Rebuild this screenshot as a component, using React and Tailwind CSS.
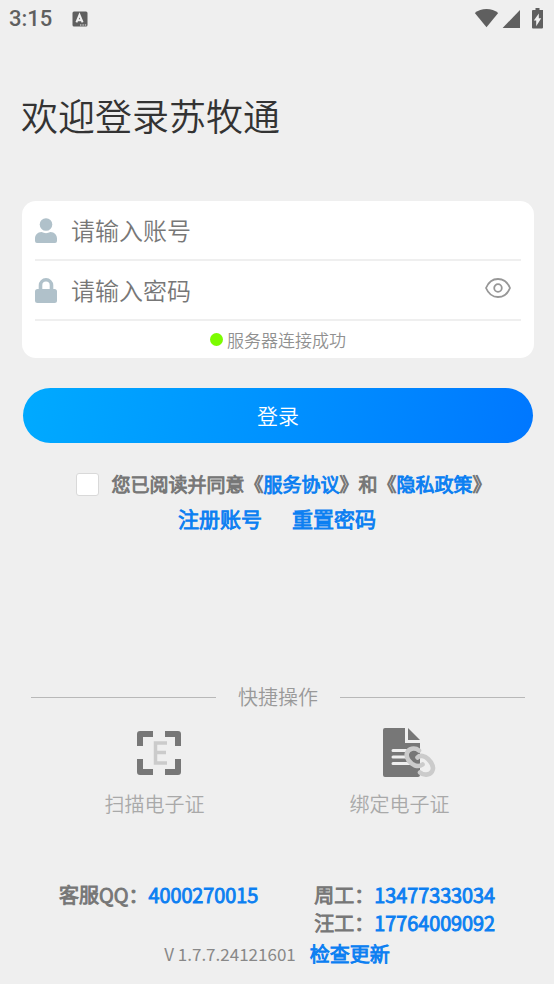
import React, { useState } from "react";

function TranslateIcon() {
  return (
    <svg width="16" height="16" viewBox="0 0 16 16" aria-hidden="true">
      <rect x="0.5" y="0.5" width="15" height="15" rx="1.5" fill="#5f5f5f" />
      <path d="M4.4 11.3 7.5 3.8l3.1 7.5M5.6 9.2h3.8" fill="none" stroke="#f0f0f0" strokeWidth="2" />
      <path d="M8 14h1.4M10.4 14h1.4M12.8 14h1.4" stroke="#f0f0f0" strokeWidth="1.2" />
    </svg>
  );
}

function StatusBar() {
  return (
    <div className="flex h-[38px] items-center justify-between pl-[9px] pr-2.5 text-[#5f5f5f]">
      <div className="flex items-center gap-5">
        <span className="font-[Roboto,sans-serif] text-[22px] leading-[38px] font-medium">3:15</span>
        <TranslateIcon />
      </div>
      <svg width="70" height="22" viewBox="0 0 70 22" fill="#5f5f5f" aria-hidden="true">
        <path d="M0.8 5C4 2.2 8 1 12.5 1S21 2.2 24.2 5L12.5 19.3Z" />
        <path d="M46 2v18H28.6Z" />
        <path d="M61.5 0h4v2H69v17.5a1 1 0 0 1-1 1h-9a1 1 0 0 1-1-1V3a1 1 0 0 1 1-1h2.5Z" />
        <path d="M64.8 5.5v4.7h2.4l-5 8v-5.7h-2.4Z" fill="#f0f0f0" />
      </svg>
    </div>
  );
}

function UserIcon() {
  return (
    <svg width="22" height="25" viewBox="0 0 22 25" fill="#b0c1ca" aria-hidden="true">
      <circle cx="11" cy="6.5" r="6.3" />
      <path d="M6.5 14c3 1.5 6 1.5 9 0C19.5 14 22 17 22 20.500V23a2 2 0 0 1-2 2H2a2 2 0 0 1-2-2v-2.500C0 17 2.500 14 6.500 14Z" />
    </svg>
  );
}

function LockIcon() {
  return (
    <svg width="22" height="25" viewBox="0 0 22 25" aria-hidden="true">
      <path d="M5.5 12V7.3a5.5 5.5 0 0 1 11 0V12" fill="none" stroke="#b0c1ca" strokeWidth="3.6" />
      <rect y="11" width="22" height="14" rx="2.5" fill="#b0c1ca" />
    </svg>
  );
}

function EyeIcon() {
  return (
    <svg width="26" height="20" viewBox="0 0 26 20" fill="none" stroke="#979797" strokeWidth="1.8" aria-hidden="true">
      <path d="M1 10C3.500 4 8 1 13 1s9.500 3 12 9c-2.500 6-7 9-12 9S3.500 16 1 10Z" strokeLinejoin="round" />
      <circle cx="13" cy="10" r="3.8" />
    </svg>
  );
}

function ScanIcon() {
  return (
    <svg width="44" height="44" viewBox="0 0 44 44" aria-hidden="true">
      <path
        d="M3 15V3h13M28 3h13v12M41 28v13H28M16 41H3V28"
        fill="none"
        stroke="#777"
        strokeWidth="6"
        strokeLinejoin="round"
      />
      <path d="M30 12H18.500v20H30M18.500 21.500H29" fill="none" stroke="#cbcbcb" strokeWidth="3.5" />
    </svg>
  );
}

function BindIcon() {
  return (
    <svg width="53" height="50" viewBox="0 0 53 50" aria-hidden="true">
      <path d="M2 0h20v15h15v32a2 2 0 0 1-2 2H2a2 2 0 0 1-2-2V2a2 2 0 0 1 2-2Z" fill="#777" />
      <path d="M25 0 37 12H25Z" fill="#777" />
      <path d="M10 22.500h13M10 29h13M10 35.500h17" stroke="#efefef" strokeWidth="3" strokeLinecap="round" />
      <g fill="none" stroke="#cbcbcb" strokeWidth="4.6" strokeLinecap="round">
        <path d="M36 22.500C31.500 19 25.500 20.500 24 25c-1.500 5 3 10.500 8 12.500 3 1 5.500.5 7.500-1" />
        <path d="M34.500 29.500C37 26.500 42 28 45 31c4 4 6.500 8.500 4 12.500-2.500 4-8.500 4-12 1" />
      </g>
    </svg>
  );
}

function QuickAction({ icon, label }) {
  return (
    <button type="button" className="flex flex-1 flex-col items-center text-[20px] leading-7 text-[#a9a9a9]">
      <span className="flex h-[50px] items-center">{icon}</span>
      <span className="mt-3">{label}</span>
    </button>
  );
}

function Phone({ name, number }) {
  return (
    <p>
      {name}：<a href={`tel:${number}`} className="text-[#0c7ff2]">{number}</a>
    </p>
  );
}

export default function App() {
  const [showPassword, setShowPassword] = useState(false);

  return (
    <main className="flex min-h-screen flex-col bg-[#efefef] font-['Noto_Sans_CJK_SC',sans-serif] font-[350]">
      <StatusBar />

      <h1 className="mt-[49px] px-[21px] text-[37px] leading-[56px] text-[#333]">欢迎登录苏牧通</h1>

      <form className="mt-[58px] pr-5 pl-[22px]" onSubmit={(e) => e.preventDefault()}>
        <div className="rounded-[14px] bg-white px-[13px]">
          <label className="flex h-[60px] items-center gap-3.5 border-b-2 border-[#efefef]">
            <UserIcon />
            <input
              type="text"
              aria-label="账号"
              placeholder="请输入账号"
              className="min-w-0 flex-1 text-[24px] leading-9 text-[#333] outline-none placeholder:text-[#777]"
            />
          </label>
          <div className="flex h-[60px] items-center border-b-2 border-[#efefef] pr-2.5">
            <label className="flex min-w-0 flex-1 items-center gap-3.5">
              <LockIcon />
              <input
                type={showPassword ? "text" : "password"}
                aria-label="密码"
                placeholder="请输入密码"
                className="min-w-0 flex-1 text-[24px] leading-9 text-[#333] outline-none placeholder:text-[#777]"
              />
            </label>
            <button type="button" aria-label="显示密码" className="pb-1" onClick={() => setShowPassword(!showPassword)}>
              <EyeIcon />
            </button>
          </div>
          <p className="flex h-[37px] items-center justify-center gap-1 text-[17px] text-[#909090]">
            <span className="size-[13px] rounded-full bg-[#7cfc00]" />
            服务器连接成功
          </p>
        </div>

        <div className="mt-[30px] px-px">
          <button
            type="submit"
            className="h-[55px] w-full rounded-full bg-linear-100 from-[#00aaff] to-[#0077ff] text-[21px] text-white"
          >
            登录
          </button>
        </div>

        <div className="mt-[27px] flex items-center justify-center gap-3 pl-3">
          <input
            id="agree"
            type="checkbox"
            className="size-[23px] appearance-none rounded-[3px] border border-[#d9d9d9] bg-white checked:bg-[#0c7ff2]"
          />
          <label htmlFor="agree" className="text-[19px] leading-7 text-[#777] [-webkit-text-stroke:1px]">
            您已阅读并同意《<a href="#" className="text-[#0c7ff2]">服务协议</a>》和《<a href="#" className="text-[#0c7ff2]">隐私政策</a>》
          </label>
        </div>
      </form>

      <nav className="mt-1 flex justify-center gap-[30px] text-[21px] leading-8 text-[#0c7ff2] [-webkit-text-stroke:1px]">
        <a href="#">注册账号</a>
        <a href="#">重置密码</a>
      </nav>

      <section className="mt-auto">
        <h2 className="flex items-center gap-[22px] pr-[29px] pl-[31px] text-[20px] leading-7 text-[#999] before:h-px before:flex-1 before:bg-[#b8b8b8] after:h-px after:flex-1 after:bg-[#b8b8b8]">
          快捷操作
        </h2>
        <div className="mt-[17px] flex px-8">
          <QuickAction icon={<span className="pl-2"><ScanIcon /></span>} label="扫描电子证" />
          <QuickAction icon={<span className="pl-5"><BindIcon /></span>} label="绑定电子证" />
        </div>
      </section>

      <footer className="mt-[63px] pb-4 text-[20px] leading-7 text-[#777]">
        <div className="flex justify-center gap-14 [-webkit-text-stroke:1px]">
          <Phone name="客服QQ" number="4000270015" />
          <div>
            <Phone name="周工" number="13477333034" />
            <Phone name="汪工" number="17764009092" />
          </div>
        </div>
        <div className="mt-[3px] flex items-center justify-center gap-3.5">
          <span className="text-[17px] font-normal text-[#888]">V 1.7.7.24121601</span>
          <a href="#" className="text-[#0c7ff2] [-webkit-text-stroke:1px]">检查更新</a>
        </div>
      </footer>
    </main>
  );
}
